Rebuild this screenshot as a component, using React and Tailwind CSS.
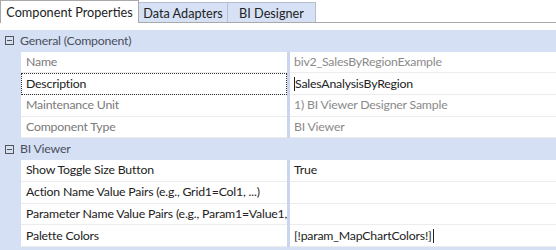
import React from 'react';

const Box = () => (
  <span className="w-[9px] h-[9px] border border-[#555] flex items-center justify-center shrink-0">
    <span className="w-[5px] h-px bg-[#555]" />
  </span>
);

function Group({ title }) {
  return (
    <div className="h-[21.7px] bg-[#d5e0f5] flex items-center pl-[5px] gap-[6px] text-[#4a4f5a]">
      <Box />
      <span>{title}</span>
    </div>
  );
}

function Row({ label, value, dim, focus, caretStart, caretEnd }) {
  return (
    <div className="h-[21.7px] flex bg-[#d5e0f5] pl-[21px]">
      <div className={`w-[266px] bg-white border-b border-[#ececec] flex items-center pl-[5px] whitespace-nowrap ${dim ? 'text-[#7a7a7a]' : 'text-[#222]'} ${focus ? 'outline outline-1 outline-dotted outline-[#333] -outline-offset-1' : ''}`}>
        {label}
      </div>
      <div className="w-[3px] bg-[#c9d6ee]" />
      <div className={`flex-1 bg-white border-b border-[#ececec] flex items-center pl-[4px] ${dim ? 'text-[#8a8a8a]' : 'text-[#222]'}`}>
        {caretStart && <span className="w-px h-[14px] bg-[#222]" />}
        <span>{value}</span>
        {caretEnd && <span className="w-px h-[14px] bg-[#222] ml-px" />}
      </div>
    </div>
  );
}

export default function App() {
  return (
    <div className="w-[556px] h-[250px] bg-white overflow-hidden text-[12.3px] tracking-[-0.2px] leading-[16px]" style={{ fontFamily: 'Lato, "Noto Sans", sans-serif' }}>
      {/* Tabs */}
      <div className="h-[23px] flex items-end border-b border-[#a9a9a9] tracking-normal">
        <div className="h-[23px] w-[139px] bg-white border border-b-0 border-[#a9a9a9] -mb-px flex items-center justify-center text-[12.7px] text-[#222]">Component Properties</div>
        <div className="h-[20px] w-[89px] bg-[#d6e1f5] border-r border-t border-[#b5bfd0] flex items-center justify-center text-[12.7px] text-[#222]">Data Adapters</div>
        <div className="h-[20px] w-[88px] bg-[#d6e1f5] border-r border-t border-[#b5bfd0] flex items-center justify-center text-[12.7px] text-[#222]">BI Designer</div>
      </div>
      <div className="h-[7px]" />
      <Group title="General (Component)" />
      <Row label="Name" value="biv2_SalesByRegionExample" dim />
      <Row label="Description" value="SalesAnalysisByRegion" focus caretStart />
      <Row label="Maintenance Unit" value="1) BI Viewer Designer Sample" dim />
      <Row label="Component Type" value="BI Viewer" dim />
      <Group title="BI Viewer" />
      <Row label="Show Toggle Size Button" value="True" />
      <Row label="Action Name Value Pairs (e.g., Grid1=Col1, ...)" value="" />
      <Row label="Parameter Name Value Pairs (e.g., Param1=Value1," value="" />
      <Row label="Palette Colors" value="[!param_MapChartColors!]" caretEnd />
      <div className="h-[4px] bg-[#d5e0f5]" />
    </div>
  );
}
